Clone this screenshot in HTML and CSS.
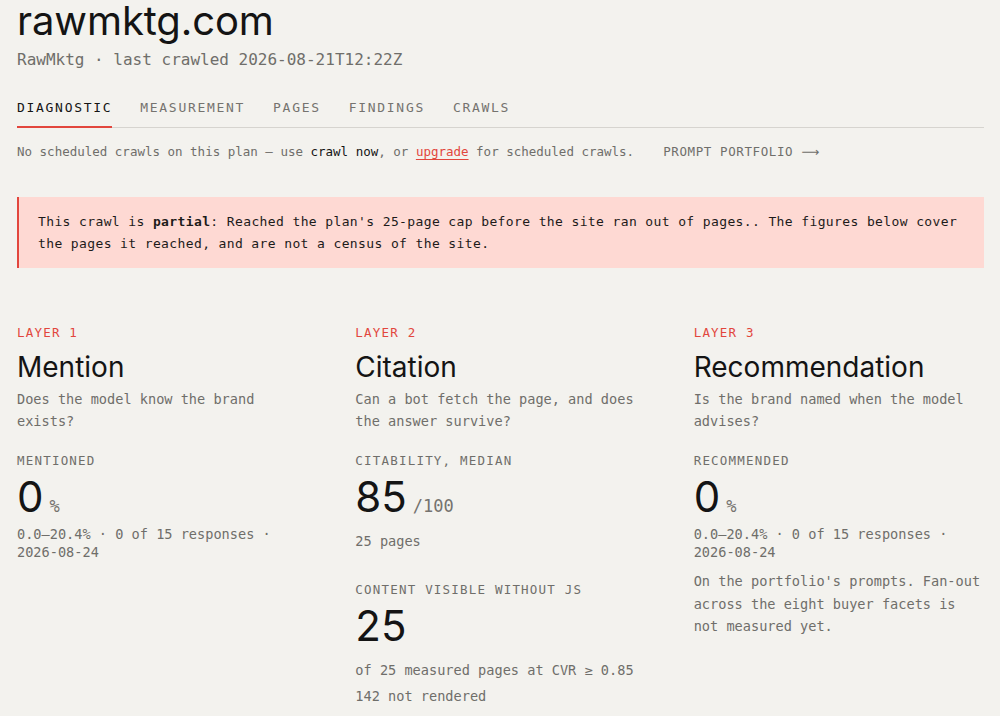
FILE: index.html
```html
<!DOCTYPE html>
<html lang="en">
<head>
    <meta charset="UTF-8">
    <meta name="viewport" content="width=device-width, initial-scale=1.0">
    <title>rawmktg.com · Diagnostic</title>
    <link rel="stylesheet" href="styles.css">
</head>
<body>

<main id="page">
    <header class="site-head">
        <h1 class="site-name">rawmktg.com</h1>
        <p class="site-meta">RawMktg · last crawled 2026-08-21T12:22Z</p>
    </header>

    <nav class="tabs">
        <a href="#" class="tab active">DIAGNOSTIC</a>
        <a href="#" class="tab">MEASUREMENT</a>
        <a href="#" class="tab">PAGES</a>
        <a href="#" class="tab">FINDINGS</a>
        <a href="#" class="tab">CRAWLS</a>
    </nav>

    <div class="plan-note">
        <span>No scheduled crawls on this plan — use <b class="strong">crawl now</b>, or <a href="#" class="link-red">upgrade</a> for scheduled crawls.</span>
        <a href="#" class="portfolio-link">PROMPT PORTFOLIO <span class="arrow">⟶</span></a>
    </div>

    <div class="alert">
        This crawl is <strong>partial</strong>: Reached the plan's 25-page cap before the site ran out of pages.. The figures below cover the pages it reached, and are not a census of the site.
    </div>

    <section class="layers">
        <div class="layer">
            <div class="layer-tag">LAYER 1</div>
            <h2 class="layer-title">Mention</h2>
            <p class="layer-desc">Does the model know the brand exists?</p>

            <div class="metric">
                <div class="metric-label">MENTIONED</div>
                <div class="metric-value"><span class="num">0</span><span class="unit">%</span></div>
                <p class="metric-meta">0.0–20.4% · 0 of 15 responses · 2026-08-24</p>
            </div>
        </div>

        <div class="layer">
            <div class="layer-tag">LAYER 2</div>
            <h2 class="layer-title">Citation</h2>
            <p class="layer-desc">Can a bot fetch the page, and does the answer survive?</p>

            <div class="metric">
                <div class="metric-label">CITABILITY, MEDIAN</div>
                <div class="metric-value"><span class="num">85</span><span class="unit">/100</span></div>
                <p class="metric-note">25 pages</p>
            </div>

            <div class="metric metric-second">
                <div class="metric-label">CONTENT VISIBLE WITHOUT JS</div>
                <div class="metric-value"><span class="num">25</span></div>
                <p class="metric-note">of 25 measured pages at CVR ≥ 0.85</p>
                <p class="metric-note">142 not rendered</p>
            </div>
        </div>

        <div class="layer">
            <div class="layer-tag">LAYER 3</div>
            <h2 class="layer-title">Recommendation</h2>
            <p class="layer-desc">Is the brand named when the model advises?</p>

            <div class="metric">
                <div class="metric-label">RECOMMENDED</div>
                <div class="metric-value"><span class="num">0</span><span class="unit">%</span></div>
                <p class="metric-meta">0.0–20.4% · 0 of 15 responses · 2026-08-24</p>
                <p class="layer-desc layer-foot">On the portfolio's prompts. Fan-out across the eight buyer facets is not measured yet.</p>
            </div>
        </div>
    </section>
</main>

</body>
</html>
```

FILE: styles.css
```css
body {
    margin: 0;
    background-color: #f3f2ee;
    color: #141414;
    font-family: "DejaVu Sans Mono", "Liberation Mono", monospace;
}

#page {
    padding: 2px 16px 0 17px;
}

a {
    text-decoration: none;
    color: inherit;
}

/* EN-TETE */
.site-name {
    margin: 0;
    font-family: Inter, "Noto Sans", sans-serif;
    font-weight: 400;
    font-size: 40px;
    line-height: 38px;
    letter-spacing: -0.1px;
    color: #141414;
}

.site-meta {
    margin: 8px 0 0;
    font-size: 16px;
    line-height: 24px;
    color: #6f6e6a;
}

/* ONGLETS */
.tabs {
    display: flex;
    gap: 28px;
    margin-top: 27px;
    border-bottom: 1px solid #d6d4cf;
}

.tab {
    font-size: 13px;
    line-height: 18px;
    letter-spacing: 1.7px;
    color: #75736f;
    padding-bottom: 9px;
    margin-bottom: -1px;
    border-bottom: 2px solid transparent;
}

.tab.active {
    color: #141414;
    border-bottom-color: #e2463d;
}

/* NOTE DU PLAN */
.plan-note {
    display: flex;
    gap: 29px;
    margin-top: 14px;
    font-size: 12.5px;
    line-height: 20px;
    color: #6f6e6a;
}

.plan-note .strong {
    font-weight: 400;
    color: #141414;
}

.link-red {
    color: #e2463d;
    text-decoration: underline;
    text-underline-offset: 3px;
}

.portfolio-link {
    letter-spacing: 0.6px;
    color: #6f6e6a;
}

.arrow {
    font-family: "DejaVu Sans", sans-serif;
    letter-spacing: 0;
}

/* AVERTISSEMENT */
.alert {
    margin-top: 35px;
    padding: 14px 20px 13px 19px;
    background-color: #fed9d3;
    border-left: 2px solid #e2463d;
    font-size: 13px;
    letter-spacing: 0.38px;
    line-height: 22px;
    color: #1d1b1a;
}

.alert strong {
    font-weight: 700;
}

/* LES TROIS COUCHES */
.layers {
    display: grid;
    grid-template-columns: repeat(3, 1fr);
    gap: 48px;
    margin-top: 57px;
}

.layer-tag {
    font-size: 12.5px;
    line-height: 16px;
    letter-spacing: 1.2px;
    color: #e2463d;
}

.layer-title {
    margin: 9px 0 0;
    font-family: Inter, "Noto Sans", sans-serif;
    font-weight: 400;
    font-size: 28px;
    line-height: 34px;
    color: #141414;
}

.layer-desc {
    margin: 4px 0 0;
    font-size: 13.6px;
    line-height: 22px;
    color: #6f6e6a;
}

.metric {
    margin-top: 21px;
}

.metric-second {
    margin-top: 30px;
}

.metric-label {
    font-size: 12.5px;
    line-height: 16px;
    letter-spacing: 1.2px;
    color: #6f6e6a;
}

.metric-value {
    display: flex;
    align-items: baseline;
    gap: 6px;
    margin-top: 6px;
}

.metric-value .num {
    font-family: Inter, "Noto Sans", sans-serif;
    font-size: 42px;
    line-height: 44px;
    color: #141414;
}

.metric-value .unit {
    font-size: 17px;
    color: #75736f;
}

.metric-meta {
    margin: 6px 0 0;
    font-size: 13.6px;
    line-height: 18px;
    color: #6f6e6a;
}

.metric-note {
    margin: 11px 0 0;
    font-size: 13.6px;
    line-height: 22px;
    color: #6f6e6a;
}

.metric-note + .metric-note {
    margin-top: 4px;
}

.layer-foot {
    margin-top: 9px;
    line-height: 22.5px;
}
```
